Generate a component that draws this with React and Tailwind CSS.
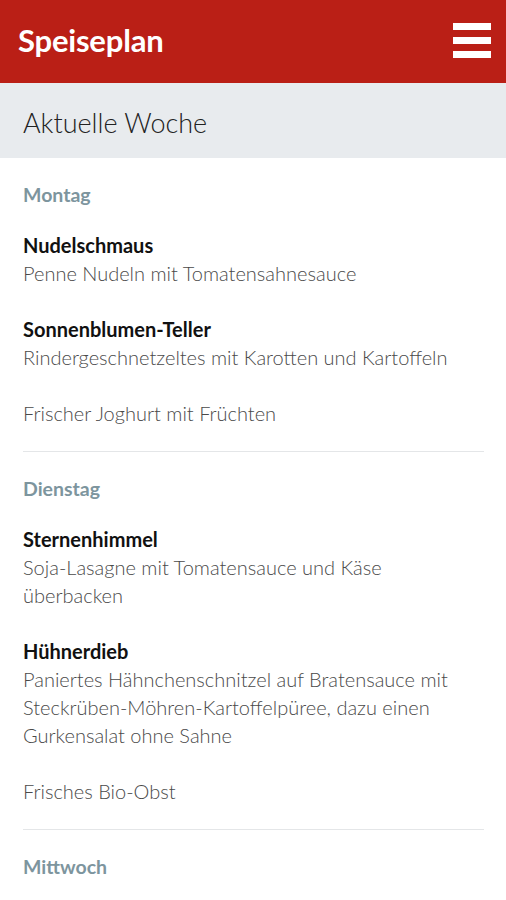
import React from 'react';

const days = [
  {
    name: 'Montag',
    meals: [
      { title: 'Nudelschmaus', desc: 'Penne Nudeln mit Tomatensahnesauce' },
      { title: 'Sonnenblumen-Teller', desc: 'Rindergeschnetzeltes mit Karotten und Kartoffeln' },
      { title: null, desc: 'Frischer Joghurt mit Früchten' },
    ],
  },
  {
    name: 'Dienstag',
    meals: [
      { title: 'Sternenhimmel', desc: 'Soja-Lasagne mit Tomatensauce und Käse überbacken' },
      {
        title: 'Hühnerdieb',
        desc: 'Paniertes Hähnchenschnitzel auf Bratensauce mit Steckrüben-Möhren-Kartoffelpüree, dazu einen Gurkensalat ohne Sahne',
      },
      { title: null, desc: 'Frisches Bio-Obst' },
    ],
  },
  { name: 'Mittwoch', meals: [] },
];

const App = () => {
  return (
    <div className="min-h-screen bg-white" style={{ fontFamily: 'Lato, "Noto Sans", sans-serif' }}>
      {/* Header */}
      <header className="h-[83px] bg-[#ba1f16] flex items-center justify-between pl-[18px] pr-[15px]">
        <h1 className="text-[31px] font-bold text-white tracking-[-0.2px] pb-[3px]">Speiseplan</h1>
        <button className="flex flex-col gap-[7px] pb-[3px]">
          <span className="block w-[38px] h-[7px] bg-white" />
          <span className="block w-[38px] h-[7px] bg-white" />
          <span className="block w-[38px] h-[7px] bg-white" />
        </button>
      </header>

      {/* Week */}
      <div className="h-[75px] bg-[#e8ebee] flex items-center px-[23px]">
        <h2 className="text-[27px] font-light text-[#222] pt-[5px]">Aktuelle Woche</h2>
      </div>

      {/* Days */}
      <div className="pl-[23px] pr-[22px]">
        {days.map((day, i) => (
          <section key={day.name} className={i < days.length - 1 ? 'border-b border-[#e4e6e8] pb-[24px]' : ''}>
            <h3 className="pt-[23px] pb-[22px] text-[19.5px] leading-[28px] font-bold text-[#7d959e]">{day.name}</h3>
            {day.meals.map((meal, j) => (
              <div key={j} className="mb-[28px] last:mb-0 leading-[28px]">
                {meal.title && <div className="text-[20px] font-bold text-[#111]">{meal.title}</div>}
                <div className="text-[20px] text-[#4a4a4a] font-light">{meal.desc}</div>
              </div>
            ))}
          </section>
        ))}
      </div>
    </div>
  );
};

export default App;
